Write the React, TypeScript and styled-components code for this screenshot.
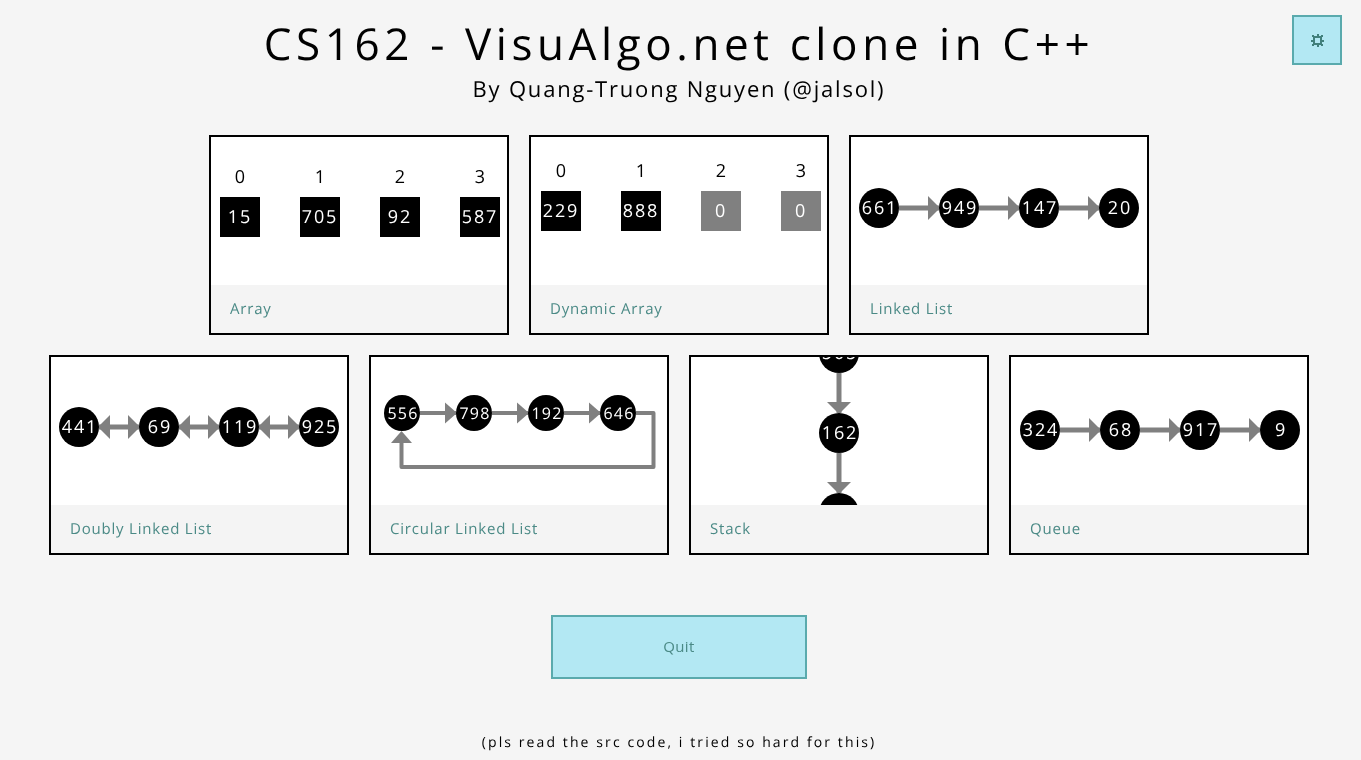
import React, { FC } from 'react';
import styled, { createGlobalStyle } from 'styled-components';

const GlobalStyle = createGlobalStyle`
    html, body {
        margin: 0;
        padding: 0;
        background: #f5f5f5;
        overflow: hidden;
    }
`;

const Page = styled.div`
    width: 1358px;
    height: 760px;
    padding-top: 15px;
    box-sizing: border-box;
    display: flex;
    flex-direction: column;
    align-items: center;
    font-family: 'Open Sans', sans-serif;
    color: #000;
    text-rendering: geometricPrecision;
    will-change: transform;
`;

const Header = styled.header`
    width: 100%;
    height: 120px;
    display: grid;
    grid-template-columns: 1fr auto 1fr;
    align-items: start;
`;

const TitleBlock = styled.div`
    grid-column: 2;
    text-align: center;
`;

const Title = styled.h1`
    margin: -2px 0 0;
    font-size: 44px;
    line-height: 60px;
    font-weight: 400;
    letter-spacing: 4.6px;
`;

const Subtitle = styled.div`
    margin-top: 1px;
    font-size: 22px;
    line-height: 30px;
    font-weight: 400;
    letter-spacing: 1.8px;
`;

const SquareButton = styled.button`
    grid-column: 3;
    justify-self: end;
    margin-right: 16px;
    width: 50px;
    height: 50px;
    display: flex;
    align-items: center;
    justify-content: center;
    padding: 0;
    background: #b3e8f3;
    border: 2px solid #5aaaad;
    color: #41807c;
`;

const CardRow = styled.div`
    display: flex;
    gap: 20px;
    margin-bottom: 20px;
`;

const Card = styled.div`
    width: 300px;
    height: 200px;
    box-sizing: border-box;
    border: 2px solid #000;
    background: #f4f4f4;
    display: flex;
    flex-direction: column;
`;

const Thumb = styled.div`
    height: 148px;
    background: #fff;
    overflow: hidden;
`;

const Caption = styled.div`
    flex: 1;
    padding-left: 19px;
    padding-bottom: 1px;
    display: flex;
    align-items: center;
    font-size: 15px;
    letter-spacing: 0.8px;
    color: #4b8a86;
`;

const ArrayRow = styled.div<{ $top: number; $left: number }>`
    display: flex;
    gap: 40px;
    padding: ${p => p.$top}px 0 0 ${p => p.$left}px;
`;

const ArrayCell = styled.div`
    width: 40px;
    display: flex;
    flex-direction: column;
    align-items: center;
`;

const CellIndex = styled.div`
    height: 40px;
    line-height: 40px;
    font-size: 18px;
`;

const CellValue = styled.div<{ $empty?: boolean }>`
    width: 40px;
    height: 40px;
    display: flex;
    align-items: center;
    justify-content: center;
    background: ${p => (p.$empty ? '#808080' : '#000')};
    color: #fff;
    font-size: 18px;
    letter-spacing: 1.9px;
    white-space: nowrap;
`;

const Diagram = styled.svg`
    display: block;
    width: 296px;
    height: 148px;
`;

const NodeText = styled.text<{ $small?: boolean }>`
    font-family: 'Open Sans', sans-serif;
    font-size: ${p => (p.$small ? 16 : 18)}px;
    letter-spacing: ${p => (p.$small ? 1.2 : 1.9)}px;
    fill: #fff;
    text-anchor: middle;
    dominant-baseline: central;
`;

const QuitButton = styled.button`
    margin-top: 40px;
    width: 256px;
    height: 64px;
    padding-bottom: 4px;
    background: #b3e8f3;
    border: 2px solid #5aaaad;
    font-family: 'Open Sans', sans-serif;
    font-size: 15px;
    letter-spacing: 0.4px;
    color: #4b8a86;
`;

const Footer = styled.div`
    margin-top: 54px;
    font-size: 14px;
    line-height: 20px;
    letter-spacing: 2.1px;
`;

const GRAY = '#808080';

const GearIcon: FC = () => (
    <svg width="15" height="15" viewBox="0 0 15 15" fill="none" shapeRendering="crispEdges">
        <path d="M4 3h7v1h1v7h-1v1H4v-1H3V4h1z M5 5v5h5V5z" fill="currentColor" fillRule="evenodd" />
        <path d="M6.500 1h2v2h-2z M6.500 12h2v2h-2z M1 6.500h2v2H1z M12 6.500h2v2h-2z M2 2h2v2H2z M11 2h2v2h-2z M2 11h2v2H2z M11 11h2v2h-2z" fill="currentColor" />
    </svg>
);

type Dir = 'right' | 'left' | 'down' | 'up';

// triangle with its tip at x,y pointing in the given direction
const Head: FC<{ x: number; y: number; dir: Dir; len?: number; half?: number }> = ({ x, y, dir, len = 12, half = 12 }) => {
    const pts = {
        right: `${x},${y} ${x - len},${y - half} ${x - len},${y + half}`,
        left: `${x},${y} ${x + len},${y - half} ${x + len},${y + half}`,
        down: `${x},${y} ${x - half},${y - len} ${x + half},${y - len}`,
        up: `${x},${y} ${x - half},${y + len} ${x + half},${y + len}`,
    }[dir];
    return <polygon points={pts} fill={GRAY} />;
};

const Node: FC<{ x: number; y: number; r?: number; value: string; small?: boolean }> = ({ x, y, r = 20, value, small }) => (
    <g>
        <circle cx={x} cy={y} r={r} fill="#000" />
        <NodeText x={x + 1} y={y} $small={small}>{value}</NodeText>
    </g>
);

const HorizontalList: FC<{ xs: number[]; y: number; values: string[]; both?: boolean }> = ({ xs, y, values, both }) => (
    <Diagram>
        {xs.slice(1).map((x, i) => (
            <g key={x}>
                <line x1={xs[i] + 20} y1={y} x2={x - 20} y2={y} stroke={GRAY} strokeWidth="5" />
                <Head x={x - 19} y={y} dir="right" />
                {both && <Head x={xs[i] + 19} y={y} dir="left" />}
            </g>
        ))}
        {xs.map((x, i) => <Node key={x} x={x} y={y} value={values[i]} />)}
    </Diagram>
);

const CircularList: FC = () => {
    const xs = [31, 103, 175, 247];
    const values = ['556', '798', '192', '646'];
    const y = 56;
    return (
        <Diagram>
            {xs.slice(1).map((x, i) => (
                <g key={x}>
                    <line x1={xs[i] + 18} y1={y} x2={x - 18} y2={y} stroke={GRAY} strokeWidth="4" />
                    <Head x={x - 17} y={y} dir="right" half={10.5} />
                </g>
            ))}
            <path
                d="M265 56H282.500V110H30.500V84"
                fill="none"
                stroke={GRAY}
                strokeWidth="4"
                strokeLinejoin="round"
            />
            <Head x={30.5} y={74} dir="up" half={10.5} />
            {xs.map((x, i) => <Node key={x} x={x} y={y} r={18} value={values[i]} small />)}
        </Diagram>
    );
};

const StackList: FC = () => {
    const x = 148;
    const ys = [-4, 76, 156];
    const values = ['505', '162', ''];
    return (
        <Diagram>
            {ys.slice(1).map((y, i) => (
                <g key={y}>
                    <line x1={x} y1={ys[i] + 20} x2={x} y2={y - 20} stroke={GRAY} strokeWidth="5" />
                    <Head x={x} y={y - 19} dir="down" />
                </g>
            ))}
            {ys.map((y, i) => <Node key={y} x={x} y={y} value={values[i]} />)}
        </Diagram>
    );
};

const ArrayThumb: FC<{ top: number; left: number; values: number[]; filled: number }> = ({ top, left, values, filled }) => (
    <ArrayRow $top={top} $left={left}>
        {values.map((v, i) => (
            <ArrayCell key={i}>
                <CellIndex>{i}</CellIndex>
                <CellValue $empty={i >= filled}>{v}</CellValue>
            </ArrayCell>
        ))}
    </ArrayRow>
);

const App: FC = () => {
    return (
        <Page>
            <GlobalStyle />
            <Header>
                <TitleBlock>
                    <Title>CS162 - VisuAlgo.net clone in C++</Title>
                    <Subtitle>By Quang-Truong Nguyen (@jalsol)</Subtitle>
                </TitleBlock>
                <SquareButton><GearIcon /></SquareButton>
            </Header>

            <CardRow>
                <Card>
                    <Thumb><ArrayThumb top={20} left={9} values={[15, 705, 92, 587]} filled={4} /></Thumb>
                    <Caption>Array</Caption>
                </Card>
                <Card>
                    <Thumb><ArrayThumb top={14} left={10} values={[229, 888, 0, 0]} filled={2} /></Thumb>
                    <Caption>Dynamic Array</Caption>
                </Card>
                <Card>
                    <Thumb><HorizontalList xs={[28, 108, 188, 268]} y={71} values={['661', '949', '147', '20']} /></Thumb>
                    <Caption>Linked List</Caption>
                </Card>
            </CardRow>

            <CardRow>
                <Card>
                    <Thumb><HorizontalList xs={[28, 108, 188, 268]} y={70} values={['441', '69', '119', '925']} both /></Thumb>
                    <Caption>Doubly Linked List</Caption>
                </Card>
                <Card>
                    <Thumb><CircularList /></Thumb>
                    <Caption>Circular Linked List</Caption>
                </Card>
                <Card>
                    <Thumb><StackList /></Thumb>
                    <Caption>Stack</Caption>
                </Card>
                <Card>
                    <Thumb><HorizontalList xs={[29, 109, 189, 269]} y={73} values={['324', '68', '917', '9']} /></Thumb>
                    <Caption>Queue</Caption>
                </Card>
            </CardRow>

            <QuitButton>Quit</QuitButton>
            <Footer>(pls read the src code, i tried so hard for this)</Footer>
        </Page>
    );
};

export default App;
